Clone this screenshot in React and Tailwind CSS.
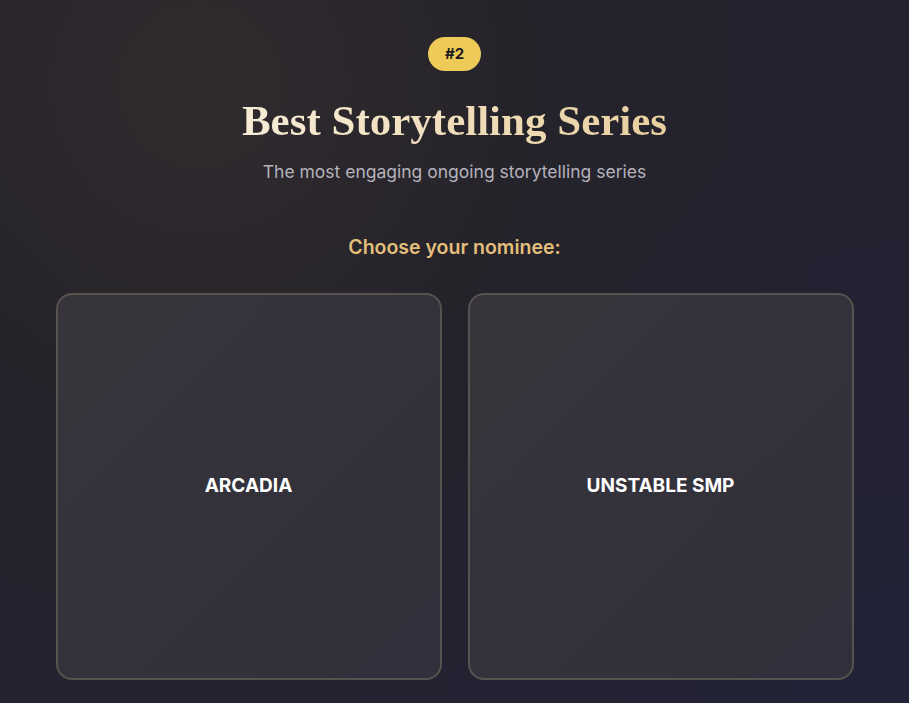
const nominees = ['ARCADIA', 'UNSTABLE SMP']

export default function App() {
  return (
    <div
      className="relative h-[703px] w-full overflow-hidden bg-[#232230]"
      style={{ fontFamily: 'Inter, "Liberation Sans", sans-serif' }}
    >
      <div className="pointer-events-none absolute inset-0 bg-[radial-gradient(circle_at_22%_12%,#302b2e_0%,#25232a_35%,rgba(35,34,48,0)_70%)]" />
      <div className="pointer-events-none absolute inset-0 bg-[radial-gradient(circle_at_100%_100%,#232338_0%,rgba(35,35,56,0)_50%)]" />

      <div className="relative flex flex-col items-center pt-[37px]">
        <span className="flex h-[34px] w-[53px] items-center justify-center rounded-full bg-[#eecb58] text-[15px] font-bold text-[#1c1a1e]">
          #2
        </span>

        <h1
          className="mt-[24px] bg-gradient-to-r from-[#f6ecd6] to-[#e9cf9e] bg-clip-text text-[43px] font-bold leading-[52px] text-transparent"
          style={{ fontFamily: '"Liberation Serif", "DejaVu Serif", serif' }}
        >
          Best Storytelling Series
        </h1>

        <p className="mt-[12px] text-[17.5px] leading-[26px] text-[#b4b2bc]">
          The most engaging ongoing storytelling series
        </p>

        <h2 className="mt-[48px] text-[19.5px] font-semibold leading-[28px] text-[#e3bf7b]">
          Choose your nominee:
        </h2>

        <div className="mt-[32px] grid w-[798px] grid-cols-2 gap-[26px]">
          {nominees.map((name) => (
            <button
              key={name}
              type="button"
              className="flex h-[387px] items-center justify-center rounded-[16px] border-2 border-[#57534f] bg-gradient-to-br from-[#37353b] to-[#30303c] text-[19px] font-bold text-white"
            >
              {name}
            </button>
          ))}
        </div>
      </div>
    </div>
  )
}
